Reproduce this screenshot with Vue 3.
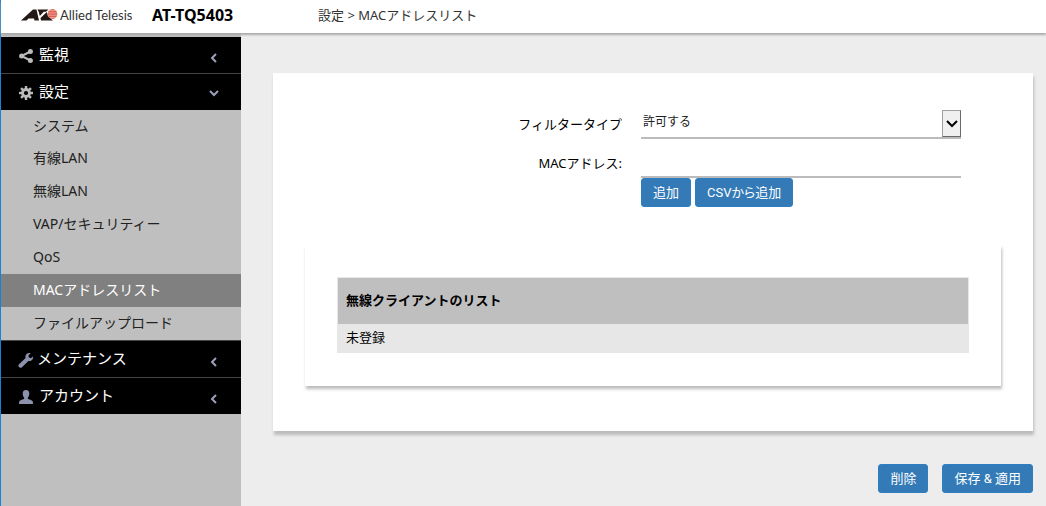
<script setup>
import { ref } from 'vue'

const filterType = ref('allow')
const macAddress = ref('')

const menu = [
  { label: '監視', icon: 'share' },
  {
    label: '設定',
    icon: 'gear',
    open: true,
    children: ['システム', '有線LAN', '無線LAN', 'VAP/セキュリティー', 'QoS', 'MACアドレスリスト', 'ファイルアップロード'],
  },
  { label: 'メンテナンス', icon: 'wrench' },
  { label: 'アカウント', icon: 'user' },
]
const current = 'MACアドレスリスト'
const teeth = [0, 45, 90, 135, 180, 225, 270, 315]
</script>

<template>
  <div class="page">
    <header class="topbar">
      <div class="brand">
        <svg class="mark" viewBox="0 0 37 14" aria-hidden="true">
          <defs>
            <clipPath id="sun"><circle cx="31.500" cy="6" r="4.800" /></clipPath>
          </defs>
          <g clip-path="url(#sun)">
            <rect x="25" y="0" width="12" height="12" fill="#f3b5a8" />
            <g fill="#dc5546">
              <rect x="25" y="1" width="12" height="1.300" />
              <rect x="25" y="3.200" width="12" height="1.300" />
              <rect x="25" y="5.400" width="12" height="1.300" />
              <rect x="25" y="7.600" width="12" height="1.300" />
              <rect x="25" y="9.800" width="12" height="1.300" />
            </g>
          </g>
          <g fill="#231815">
            <path d="M0 12.500 12 1.500h3.500L18 12.500h-4.500L13 10.500H7.500l-2 2z" />
            <path d="M16.500 1.500h11L25 3.800h-2.200l-4 4.200-1-4z" />
            <path d="M19.500 10 25.800 4l1.200 4.500 5 4H20z" />
          </g>
        </svg>
        <span class="company">Allied Telesis</span>
        <strong class="model">AT-TQ5403</strong>
      </div>
      <div class="crumbs">設定 &gt; MACアドレスリスト</div>
    </header>

    <div class="body">
      <nav class="sidebar">
        <div v-for="item in menu" :key="item.label" class="group">
          <button type="button" class="head" :aria-expanded="!!item.open">
            <svg class="icon" :class="item.icon" viewBox="0 0 14 14" aria-hidden="true">
              <g v-if="item.icon === 'share'">
                <path d="M11.500 2.500 2.500 7l9 4.500" fill="none" stroke="currentColor" stroke-width="2" />
                <circle cx="2.600" cy="7" r="2.500" />
                <circle cx="11.400" cy="2.500" r="2.500" />
                <circle cx="11.400" cy="11.500" r="2.500" />
              </g>
              <g v-else-if="item.icon === 'gear'">
                <circle cx="7" cy="7" r="3.500" fill="none" stroke="currentColor" stroke-width="2.800" />
                <rect v-for="a in teeth" :key="a" x="5.800" y="0" width="2.400" height="3" :transform="`rotate(${a} 7 7)`" />
              </g>
              <path
                v-else-if="item.icon === 'wrench'"
                d="M14 3.400 11.800 5.200 9.700 4.300 9.500 2.500 11.700.2C9.200-.7 6.300 1 6.400 3.800c0 .5.100.9.200 1.200L0 11.300c-1.700 2.200.9 4.500 3 2.900L9.400 7.900c2.800.8 5.200-1.700 4.600-4.500z"
              />
              <path
                v-else
                d="M7 0C4.700 0 3.700 1.400 3.700 3.600c0 1.800.7 3.300 1.500 4.100v1C4.600 9.500.6 9.900.2 11.600L0 14h14l-.2-2.400c-.4-1.700-4.400-2.100-5-2.900v-1c.8-.8 1.500-2.300 1.500-4.100C10.300 1.400 9.300 0 7 0z"
              />
            </svg>
            <span class="title">{{ item.label }}</span>
            <svg class="chevron" :class="{ open: item.open }" viewBox="0 0 10 10" aria-hidden="true">
              <path d="M7 1 3 5l4 4" fill="none" stroke="currentColor" stroke-width="2" />
            </svg>
          </button>
          <ul v-if="item.open" class="sub">
            <li v-for="child in item.children" :key="child">
              <a href="#" :class="{ active: child === current }">{{ child }}</a>
            </li>
          </ul>
        </div>
      </nav>

      <main class="content">
        <section class="card">
          <form class="form" @submit.prevent>
            <label for="filter">フィルタータイプ</label>
            <div class="picker">
              <select id="filter" v-model="filterType">
                <option value="allow">許可する</option>
                <option value="deny">拒否する</option>
              </select>
              <span class="drop" aria-hidden="true">
                <svg viewBox="0 0 12 8"><path d="M1 1l5 5 5-5" fill="none" stroke="#000" stroke-width="2" /></svg>
              </span>
            </div>
            <label for="mac">MACアドレス:</label>
            <div>
              <input id="mac" v-model="macAddress" type="text" />
              <div class="adders">
                <button type="button" class="btn">追加</button>
                <button type="button" class="btn">CSVから追加</button>
              </div>
            </div>
          </form>

          <div class="panel">
            <table>
              <thead>
                <tr><th scope="col">無線クライアントのリスト</th></tr>
              </thead>
              <tbody>
                <tr><td>未登録</td></tr>
              </tbody>
            </table>
          </div>
        </section>

        <div class="actions">
          <button type="button" class="btn">削除</button>
          <button type="button" class="btn">保存 &amp; 適用</button>
        </div>
      </main>
    </div>
  </div>
</template>

<style>
body {
  background: #ededed;
}
</style>

<style scoped>
.page {
  display: flex;
  flex-direction: column;
  min-height: 100vh;
  box-sizing: border-box;
  border-left: 1px solid #1b80d8;
  font: 13px/20px "Noto Sans", "Noto Sans CJK JP", sans-serif;
  color: #000;
}
.topbar {
  display: flex;
  height: 33px;
  background: #fff;
  position: relative;
  box-shadow: 0 2px 2px #aaa;
}
.brand {
  display: flex;
  align-items: center;
  width: 317px;
  height: 30px;
  padding-left: 20px;
  box-sizing: border-box;
}
.mark {
  width: 37px;
  height: 14px;
}
.company {
  width: 92px;
  margin-left: 2px;
  font: 13px/20px Lato, sans-serif;
  color: #333;
}
.model {
  font-size: 16px;
}
.crumbs {
  line-height: 30px;
  color: #333;
}
.body {
  display: flex;
  flex: 1;
}
.sidebar {
  width: 240px;
  flex: none;
  padding-top: 4px;
  box-sizing: border-box;
  background: #bfbfbf;
}
.head {
  display: flex;
  align-items: center;
  width: 100%;
  height: 36px;
  padding: 0 22px 2px 18px;
  border: 0;
  background: #000;
  color: #fff;
  font: inherit;
  font-size: 15px;
  text-align: left;
}
.group + .group {
  border-top: 1px solid #444;
}
.icon {
  width: 14px;
  height: 14px;
  margin: 4px 6px 0 0;
  overflow: visible;
  color: #bbb;
  fill: currentColor;
}
.icon.wrench,
.icon.user {
  color: #8c92ac;
}
.icon.wrench {
  margin-right: 4px;
}
.title {
  flex: 1;
}
.chevron {
  width: 10px;
  height: 10px;
  margin-top: 8px;
  color: #9ba1bd;
}
.chevron.open {
  transform: rotate(-90deg);
  margin-top: 4px;
}
.sub {
  margin: 0;
  padding: 0;
  list-style: none;
}
.sub a {
  display: block;
  height: 33px;
  padding-left: 32px;
  font-size: 14px;
  line-height: 32px;
  color: #222;
  text-decoration: none;
}
.sub li:first-child a {
  height: 32px;
}
.sub a.active {
  background: #808080;
  color: #fff;
}
.content {
  flex: 1;
  min-width: 0;
  padding: 40px 13px 13px 32px;
}
.card {
  padding: 37px 32px 45px;
  background: #fff;
  box-shadow: 1px 4px 3px #bbb;
}
.form {
  display: grid;
  grid-template-columns: minmax(0, 1fr) 320px;
  gap: 10px 19px;
  padding-right: 40px;
}
.form label {
  text-align: right;
  line-height: 29px;
}
.picker {
  position: relative;
  height: 29px;
}
select,
input {
  display: block;
  width: 100%;
  height: 29px;
  box-sizing: border-box;
  margin: 0;
  padding: 0 2px 3px;
  border: 0;
  border-bottom: 2px solid #bbb;
  border-radius: 0;
  background: #fff;
  color: #222;
  font: inherit;
  outline: 0;
}
select {
  appearance: none;
  font-size: 12px;
}
.drop {
  position: absolute;
  top: 0;
  right: 0;
  display: flex;
  align-items: center;
  justify-content: center;
  width: 19px;
  height: 27px;
  box-sizing: border-box;
  border: 1px solid #a0a0a0;
  border-right-color: #696969;
  border-bottom-color: #696969;
  background: #f0f0f0;
  pointer-events: none;
}
.drop svg {
  width: 12px;
  height: 8px;
}
.adders {
  display: flex;
  gap: 4px;
}
.btn {
  height: 29px;
  padding: 0 11px;
  border: 1px solid #2e7fc2;
  border-radius: 3px;
  background: #337ab7;
  color: #fff;
  font: 13px/20px Roboto, "Noto Sans CJK JP", sans-serif;
  font-feature-settings: "palt";
}
.panel {
  margin-top: 38px;
  padding: 32px 32px 33px;
  background: #fff;
  box-shadow: 1px 3px 3px #bbb;
}
table {
  width: 100%;
  border-collapse: collapse;
  border: 1px solid #e7e7e7;
}
th,
td {
  padding: 3px 8px 5px;
  text-align: left;
  background: #e7e7e7;
}
th {
  padding: 12px 8px 14px;
  background: #bfbfbf;
}
.actions {
  display: flex;
  justify-content: flex-end;
  gap: 14px;
  margin-top: 33px;
}
</style>
